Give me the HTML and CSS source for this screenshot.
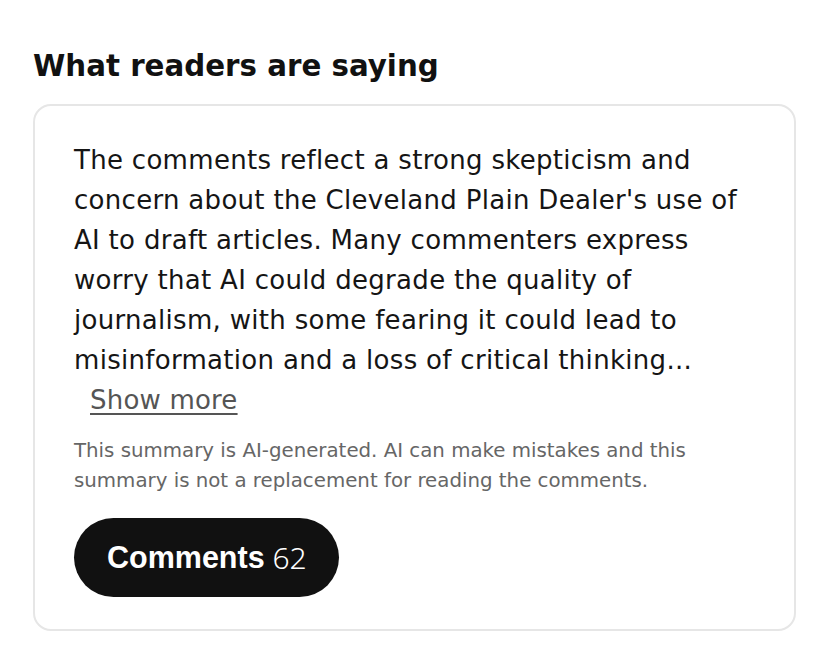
FILE: index.html
```html
<!DOCTYPE html>
<html lang="en">
<head>
<meta charset="utf-8">
<title>What readers are saying</title>
<link rel="stylesheet" href="styles.css">
</head>
<body>
<section class="summary">
  <h2 class="summary-title">What readers are saying</h2>
  <div class="card">
    <p class="summary-text">The comments reflect a strong skepticism and concern about the Cleveland Plain Dealer's use of AI to draft articles. Many commenters express worry that AI could degrade the quality of journalism, with some fearing it could lead to misinformation and a loss of critical thinking...</p>
    <button class="show-more" type="button">Show more</button>
    <p class="disclaimer">This summary is AI-generated. AI can make mistakes and this summary is not a replacement for reading the comments.</p>
    <button class="comments-btn" type="button"><span class="label">Comments</span> 62</button>
  </div>
</section>
</body>
</html>
```
FILE: styles.css
```css
* { box-sizing: border-box; }
html, body { margin: 0; padding: 0; background: #fff; }
body {
  font-family: "DejaVu Sans", "Liberation Sans", sans-serif;
  color: #111;
}
.summary {
  padding: 46px 33px 0 33px;
  width: 828px;
}
.summary-title {
  margin: 0 0 18px 0;
  font-family: "DejaVu Sans", "Liberation Sans", sans-serif;
  font-weight: 700;
  font-size: 29.3px;
  line-height: 40px;
  color: #111;
}
.card {
  width: 763px;
  border: 2px solid #e6e6e6;
  border-radius: 18px;
  padding: 34px 40px 32px 39px;
}
.summary-text {
  margin: 0;
  font-size: 26px;
  line-height: 40px;
  letter-spacing: 0.3px;
  color: #151515;
  font-weight: 400;
}
.show-more {
  display: block;
  margin: 0 0 0 16px;
  padding: 0;
  border: 0;
  background: none;
  font-family: inherit;
  font-size: 26px;
  line-height: 40px;
  letter-spacing: 0.2px;
  color: #555;
  text-decoration: underline;
  text-underline-offset: 4px;
  text-decoration-thickness: 2px;
  cursor: pointer;
}
.disclaimer {
  margin: 16px 0 0 0;
  font-size: 19.8px;
  line-height: 30px;
  color: #666;
}
.comments-btn {
  display: inline-flex;
  align-items: center;
  margin-top: 22px;
  height: 79px;
  padding: 0 32px 0 33px;
  border: 0;
  border-radius: 40px;
  background: #111;
  color: #fff;
  font-family: "Noto Sans", "Liberation Sans", sans-serif;
  font-size: 30px;
  font-weight: 300;
  white-space: pre;
}
.comments-btn .label {
  font-family: "Liberation Sans", Arial, sans-serif;
  font-weight: 700;
  font-size: 30.5px;
}
```
